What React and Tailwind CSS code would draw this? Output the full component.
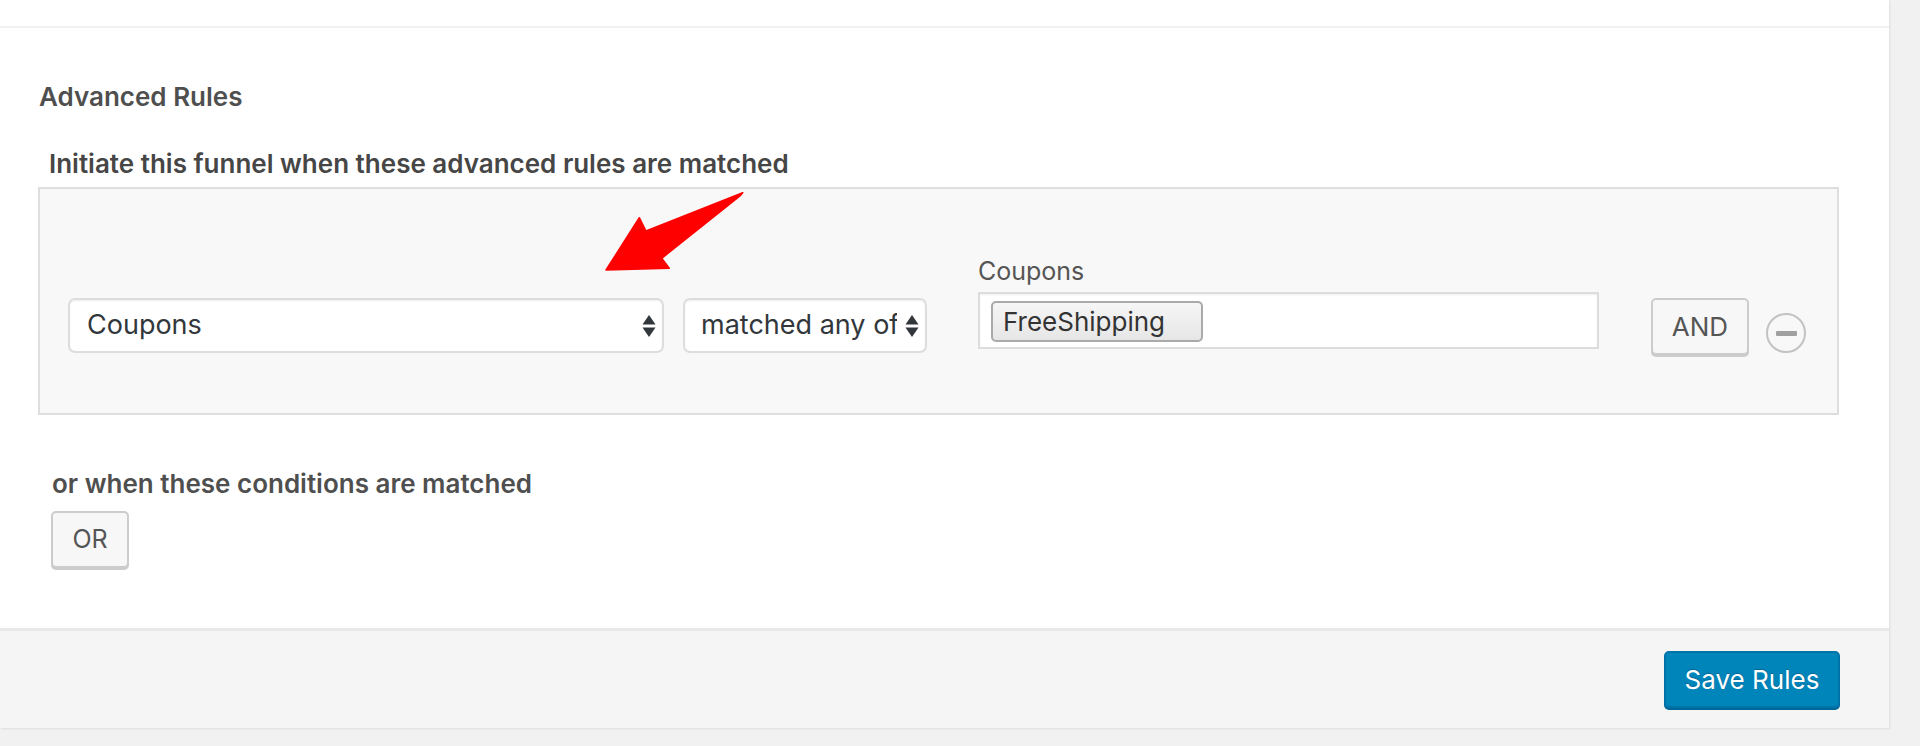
function SelectArrows() {
  return (
    <svg width="14" height="22" viewBox="0 0 14 22" className="shrink-0">
      <path d="M7 0 L13.5 9.5 L0.5 9.5 Z" fill="#32373c" />
      <path d="M7 22 L13.5 12.5 L0.5 12.5 Z" fill="#32373c" />
    </svg>
  );
}

function RuleRow() {
  return (
    <div className="flex items-start h-[228px] border-2 border-[#dedede] bg-[#f8f8f8] pt-[68px] pl-[28px]">
      <div className="mt-[41px] flex items-center justify-between w-[596px] h-[55px] rounded-[7px] border-2 border-[#dddddd] bg-white shadow-[inset_0_1px_2px_rgba(0,0,0,0.07)] pl-[17px] pr-[6px]">
        <span className="text-[27px] text-[#32373c]">Coupons</span>
        <SelectArrows />
      </div>
      <div className="mt-[41px] ml-[19px] flex items-center w-[244px] h-[55px] rounded-[7px] border-2 border-[#dddddd] bg-white shadow-[inset_0_1px_2px_rgba(0,0,0,0.07)] pl-[16px] pr-[6px]">
        <span className="flex-1 min-w-0 overflow-hidden whitespace-nowrap text-[27px] text-[#32373c]">
          matched any of
        </span>
        <span className="ml-[8px]">
          <SelectArrows />
        </span>
      </div>
      <div className="ml-[51px] flex flex-col">
        <label className="text-[25px] leading-[28px] text-[#555555]">Coupons</label>
        <div className="mt-[7px] w-[621px] h-[57px] border-2 border-[#dddddd] bg-white shadow-[inset_0_1px_2px_rgba(0,0,0,0.07)] pl-[11px] pt-[7px]">
          <span className="inline-flex items-center w-[212px] h-[41px] rounded-[5px] border-2 border-[#aaaaaa] bg-linear-to-b from-[#f6f6f6] to-[#e6e6e6] pl-[10px] text-[26px] text-[#333333]">
            FreeShipping
          </span>
        </div>
      </div>
      <button className="mt-[41px] ml-[52px] w-[98px] h-[57px] rounded-[5px] border-2 border-[#cccccc] bg-[#f7f7f7] shadow-[0_2px_0_#cccccc] text-[26px] text-[#555555]">
        AND
      </button>
      <div className="mt-[56px] ml-[17px] flex items-center justify-center w-[40px] h-[40px] rounded-full border-2 border-[#c2c2c2]">
        <span className="block w-[21px] h-[5px] rounded-[1px] bg-[#a0a0a0]" />
      </div>
    </div>
  );
}

export default function App() {
  return (
    <div className="relative w-[1920px] h-[746px] overflow-hidden bg-[#f1f1f1] font-[Inter,sans-serif]">
      <div className="w-[1889px] flex flex-col bg-white shadow-[1px_1px_2px_rgba(0,0,0,0.08)]">
        <div className="h-[28px] border-b-2 border-[#f1f1f1]" />

        <div className="h-[600px] pt-[53px] pl-[38px] pr-[50px]">
          <h3 className="text-[26px] leading-[32px] font-semibold text-[#4f4f4f] pl-[1px]">
            Advanced Rules
          </h3>
          <p className="mt-[36px] ml-[11px] text-[26px] leading-[30px] font-semibold text-[#464646]">
            Initiate this funnel when these advanced rules are matched
          </p>
          <div className="mt-[8px]">
            <RuleRow />
          </div>
          <p className="mt-[54px] ml-[14px] text-[26px] leading-[30px] font-semibold text-[#4f4f4f]">
            or when these conditions are matched
          </p>
          <button className="mt-[12px] ml-[13px] w-[78px] h-[57px] rounded-[5px] border-2 border-[#cccccc] bg-[#f7f7f7] shadow-[0_2px_0_#cccccc] text-[25px] text-[#555555]">
            OR
          </button>
        </div>

        <div className="h-[100px] border-t-[3px] border-[#e8e8e8] bg-[#f5f5f5] flex justify-end items-start pt-[20px] pr-[49px]">
          <button className="w-[176px] h-[57px] rounded-[5px] border-2 border-[#0073aa] bg-[#0085ba] shadow-[0_2px_0_#006799] text-[26px] text-white [text-shadow:0_-1px_1px_#006799]">
            Save Rules
          </button>
        </div>
      </div>

      <svg className="absolute left-[600px] top-[185px]" width="150" height="95" viewBox="0 0 150 95">
        <polygon
          points="142.7,7.7 46,46 39.3,32.7 6,85 69.3,83.3 61.7,73.3 140,11"
          fill="#ff0000"
          stroke="#ff0000"
          strokeWidth="1.5"
          strokeLinejoin="round"
        />
      </svg>
    </div>
  );
}
